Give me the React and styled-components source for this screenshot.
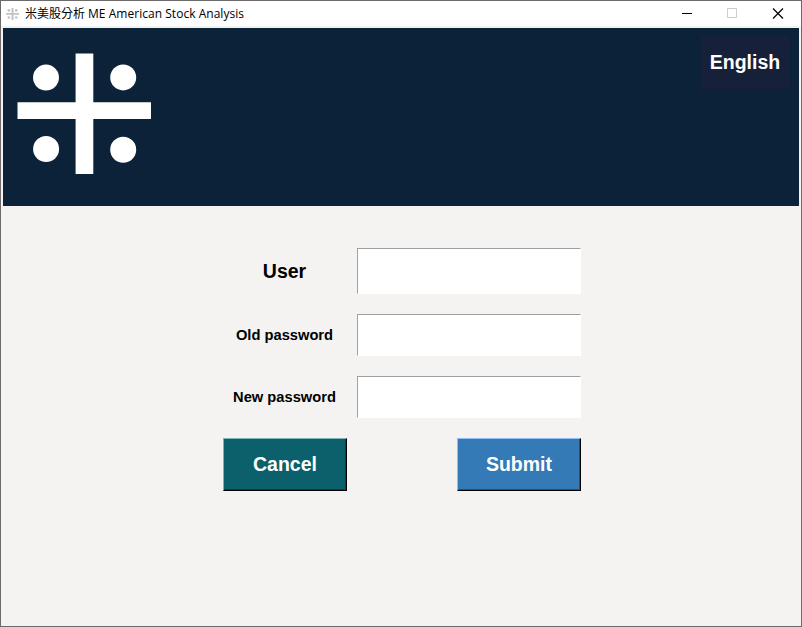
import React from "react";
import styled, { createGlobalStyle } from "styled-components";

const GlobalStyle = createGlobalStyle`
  * { box-sizing: border-box; }
  html, body { margin: 0; padding: 0; overflow: hidden; }
  body { font-family: "Liberation Sans", Arial, sans-serif; }
`;

const Window = styled.div`
  width: 802px;
  height: 627px;
  display: flex;
  flex-direction: column;
  background: #f4f3f1;
  border: 1px solid #6c6a6a;
`;

const TitleBar = styled.header`
  height: 26px;
  flex: none;
  display: flex;
  align-items: center;
  background: #fff;
  border-bottom: 1px solid #f0f0f0;
  padding-left: 5px;
`;

const TitleText = styled.div`
  display: flex;
  align-items: center;
  flex: 1;
  margin-left: 6px;
  color: #000;
  font: 12px/24px "Open Sans", "Noto Sans CJK TC", sans-serif;
  white-space: pre;
`;

const Latin = styled.span`
  letter-spacing: 0.03px;
  margin-left: 3px;
`;

const WindowControl = styled.button`
  width: ${(p) => p.$width || 45}px;
  height: 25px;
  padding: 0;
  border: 0;
  background: none;
  display: flex;
  align-items: center;
  justify-content: center;
  color: ${(p) => (p.disabled ? "#ccc" : "#000")};
`;

const Banner = styled.div`
  height: 178px;
  flex: none;
  margin: 1px 2px 0;
  display: flex;
  justify-content: space-between;
  align-items: flex-start;
  background: #0c2239;
`;

const BannerLogo = styled.svg`
  flex: none;
  margin: 20px 0 0 10px;
`;

const LanguageButton = styled.button`
  width: 88px;
  height: 53px;
  margin: 8px 10px 0 0;
  padding: 0;
  border: 0;
  background: #162039;
  color: #fff;
  font: bold 19.5px/53px "Liberation Sans", Arial, sans-serif;
`;

const Form = styled.form`
  width: 358px;
  margin: 42px 0 0 222px;
  display: flex;
  flex-direction: column;
  gap: 20px;
`;

const Field = styled.label`
  display: flex;
  align-items: center;
  height: ${(p) => p.$height}px;
`;

const Label = styled.span`
  width: 123px;
  margin-right: 11px;
  text-align: center;
  font-weight: bold;
  font-size: ${(p) => (p.$large ? 19.5 : 14.7)}px;
  line-height: 24px;
  color: #000;
`;

const Input = styled.input`
  width: 224px;
  height: 100%;
  padding: 0 6px;
  border-style: solid;
  border-width: 1px;
  border-color: #a0a0a0 #fff #fff #a0a0a0;
  border-radius: 0;
  outline: none;
  background: #fff;
  font: 20px "Liberation Sans", Arial, sans-serif;
`;

const Actions = styled.div`
  display: flex;
  justify-content: space-between;
`;

const ActionButton = styled.button`
  width: 124px;
  height: 53px;
  padding: 0 0 1px;
  border: 1px solid;
  border-color: ${(p) => p.$light} #000 #000 ${(p) => p.$light};
  box-shadow: inset -1px -1px 0 ${(p) => p.$shade};
  background: ${(p) => p.$color};
  color: #fff;
  font: bold 19.5px/50px "Liberation Sans", Arial, sans-serif;
`;

const SmallLogo = () => (
  <svg width="13" height="12" viewBox="0 0 13 12" fill="#c3c3c3" aria-hidden="true">
    <path d="M5.5 0h2v12h-2zM0 5h13v1.7H0z" />
    <circle cx="2.8" cy="2.4" r="1.3" />
    <circle cx="10.2" cy="2.4" r="1.3" />
    <circle cx="2.8" cy="9.5" r="1.3" />
    <circle cx="10.2" cy="9.5" r="1.3" />
  </svg>
);

const Logo = () => (
  <BannerLogo width="150" height="140" viewBox="13 48 150 140" fill="#fff" aria-hidden="true">
    <path d="M75.6 53.6h17.7V174H75.6zM17.5 102.3H151V119H17.5z" />
    <circle cx="46" cy="77.6" r="13" />
    <circle cx="123.2" cy="77.4" r="13" />
    <circle cx="46.1" cy="149" r="13" />
    <circle cx="123.2" cy="149.8" r="13" />
  </BannerLogo>
);

export default function App() {
  return (
    <>
      <GlobalStyle />
      <Window>
        <TitleBar>
          <SmallLogo />
          <TitleText>
            米美股分析<Latin>ME American Stock Analysis</Latin>
          </TitleText>
          <WindowControl type="button" aria-label="Minimize">
            <svg width="11" height="11" stroke="currentColor"><path d="M0 5.5h10" /></svg>
          </WindowControl>
          <WindowControl type="button" aria-label="Maximize" disabled>
            <svg width="11" height="11" stroke="currentColor" fill="none"><path d="M.5 .5h9v9h-9z" /></svg>
          </WindowControl>
          <WindowControl type="button" aria-label="Close" $width={46}>
            <svg width="12" height="12" stroke="currentColor" strokeWidth="1.2" fill="none"><path d="M1 .5l10 10M11 .5l-10 10" /></svg>
          </WindowControl>
        </TitleBar>
        <Banner>
          <Logo />
          <LanguageButton type="button">English</LanguageButton>
        </Banner>
        <Form onSubmit={(e) => e.preventDefault()}>
          <Field $height={46}>
            <Label $large>User</Label>
            <Input type="text" />
          </Field>
          <Field $height={42}>
            <Label>Old password</Label>
            <Input type="password" />
          </Field>
          <Field $height={42}>
            <Label>New password</Label>
            <Input type="password" />
          </Field>
          <Actions>
            <ActionButton type="button" $color="#0b606c" $light="#7fb3b9" $shade="#083f47">Cancel</ActionButton>
            <ActionButton type="submit" $color="#337ab7" $light="#8fbcf5" $shade="#225079">Submit</ActionButton>
          </Actions>
        </Form>
      </Window>
    </>
  );
}
